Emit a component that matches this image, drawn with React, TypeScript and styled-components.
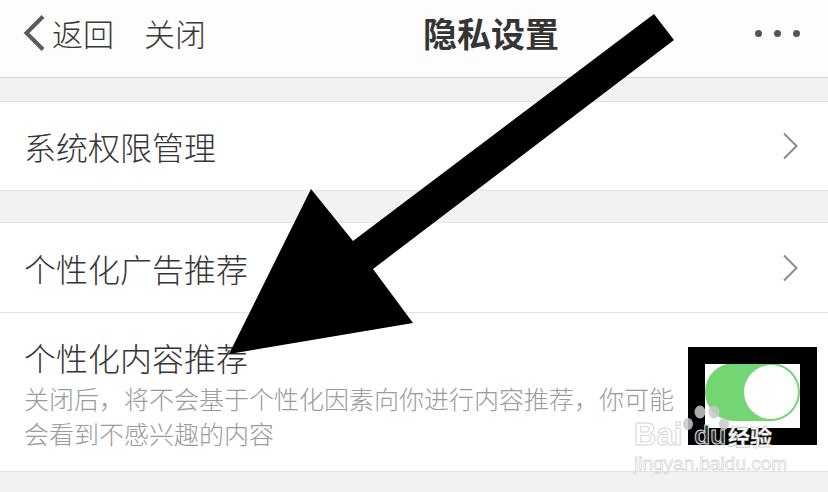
import React from "react";
import styled, { createGlobalStyle } from "styled-components";

const Global = createGlobalStyle`
  html, body { margin: 0; padding: 0; }
  body {
    width: 828px;
    height: 492px;
    overflow: hidden;
    background: #f2f2f2;
    font-family: "Noto Sans CJK SC", "Noto Sans", sans-serif;
  }
`;

const Page = styled.div`
  position: relative;
  width: 828px;
  height: 492px;
  background: #f2f2f2;
  overflow: hidden;
`;

const Header = styled.header`
  height: 78px;
  box-sizing: border-box;
  padding: 0 0 11px 22px;
  display: flex;
  align-items: center;
  background: #fdfdfd;
  border-bottom: 1px solid #d4d4d4;
`;

const NavText = styled.span<{ $gap: number }>`
  margin-left: ${(p) => p.$gap}px;
  font-size: 31px;
  line-height: 40px;
  font-weight: 300;
  color: #383838;
`;

const Title = styled.h1`
  margin: 0 0 0 217px;
  font-size: 34px;
  line-height: 44px;
  font-weight: 700;
  color: #353535;
`;

const Dots = styled.div`
  margin-left: auto;
  margin-right: 28px;
  display: flex;
  gap: 12px;
`;

const Dot = styled.span`
  width: 7px;
  height: 7px;
  border-radius: 50%;
  background: #555;
`;

const Group = styled.section<{ $top: number }>`
  margin-top: ${(p) => p.$top}px;
  background: #ffffff;
  border-top: 1px solid #e3e3e3;
  border-bottom: 1px solid #e3e3e3;
`;

const Row = styled.div<{ $h: number; $divider?: boolean }>`
  height: ${(p) => p.$h}px;
  display: flex;
  align-items: center;
  padding: 0 30px 0 24px;
  border-bottom: ${(p) => (p.$divider ? "1px solid #e3e3e3" : "none")};
`;

const Label = styled.span`
  font-size: 32px;
  line-height: 44px;
  font-weight: 300;
  color: #363636;
`;

const Chevron = styled.svg`
  margin-left: auto;
  width: 16px;
  height: 28px;
`;

const TextCol = styled.div`
  width: 660px;
  padding-top: 2px;
`;

const Sub = styled.p`
  margin: 2px 0 0;
  font-size: 25px;
  line-height: 35px;
  font-weight: 300;
  color: #9b9b9b;
`;

const Switch = styled.div<{ $on: boolean }>`
  margin-left: auto;
  margin-right: -2px;
  width: 95px;
  height: 58px;
  border-radius: 29px;
  background: ${(p) => (p.$on ? "#74d573" : "#e5e5e5")};
  display: flex;
  align-items: center;
  justify-content: ${(p) => (p.$on ? "flex-end" : "flex-start")};
  padding: 0 2px;
  box-sizing: border-box;
`;

const Knob = styled.span`
  width: 54px;
  height: 54px;
  border-radius: 50%;
  background: #ffffff;
`;

const Overlay = styled.svg`
  position: absolute;
  left: 0;
  top: 0;
  width: 828px;
  height: 492px;
  pointer-events: none;
`;

const Frame = styled.div`
  position: absolute;
  left: 688px;
  top: 347px;
  width: 129px;
  height: 98px;
  box-sizing: border-box;
  border: 17px solid #000;
  pointer-events: none;
`;

const Watermark = styled.div`
  position: absolute;
  left: 634px;
  top: 419px;
  display: flex;
  flex-direction: column;
  pointer-events: none;
  font-family: "Liberation Sans", Arial, sans-serif;
`;

const MarkLine = styled.div`
  display: flex;
  align-items: center;
  height: 32px;
  gap: 2px;
`;

const MarkBai = styled.span`
  font-size: 31px;
  line-height: 32px;
  font-weight: 700;
  color: rgba(255, 255, 255, 0.5);
  -webkit-text-stroke: 1px #d6d6d6;
`;

const MarkDu = styled.span`
  font-size: 26px;
  line-height: 32px;
  font-weight: 700;
  color: #2a2a2a;
  margin-left: 10px;
  -webkit-text-stroke: 1px #ddd;
`;

const MarkJy = styled.span`
  font-size: 22px;
  line-height: 32px;
  font-weight: 700;
  color: #ffffff;
  font-family: "Noto Sans CJK SC", sans-serif;
  -webkit-text-stroke: 0.6px #bbb;
`;

const MarkUrl = styled.span`
  margin-top: 2px;
  font-size: 19px;
  line-height: 22px;
  color: rgba(255, 255, 255, 0.6);
  -webkit-text-stroke: 0.8px #d8d8d8;
`;

const ChevronRight = () => (
  <Chevron viewBox="0 0 16 28">
    <path d="M2 1.5 L14.5 14 L2 26.5" fill="none" stroke="#8c8c8c" strokeWidth="2" />
  </Chevron>
);

export default function App() {
  return (
    <Page>
      <Global />
      <Header>
        <svg width="26" height="38" viewBox="0 0 26 38">
          <path d="M21 2.5 L4.5 19 L21 35.5" fill="none" stroke="#5a5a5a" strokeWidth="4" />
        </svg>
        <NavText $gap={4}>返回</NavText>
        <NavText $gap={30}>关闭</NavText>
        <Title>隐私设置</Title>
        <Dots>
          <Dot />
          <Dot />
          <Dot />
        </Dots>
      </Header>

      <Group $top={23}>
        <Row $h={88}>
          <Label>系统权限管理</Label>
          <ChevronRight />
        </Row>
      </Group>

      <Group $top={31}>
        <Row $h={89} $divider>
          <Label>个性化广告推荐</Label>
          <ChevronRight />
        </Row>
        <Row $h={158}>
          <TextCol>
            <Label>个性化内容推荐</Label>
            <Sub>关闭后，将不会基于个性化因素向你进行内容推荐，你可能会看到不感兴趣的内容</Sub>
          </TextCol>
          <Switch $on>
            <Knob />
          </Switch>
        </Row>
      </Group>

      <Overlay viewBox="0 0 828 492">
        <polygon
          points="654,14 674,40 373,269 413,323 229,354 311,189 353,241"
          fill="#000"
        />
      </Overlay>
      <Frame />
      <Overlay viewBox="0 0 828 492">
        <g fill="#c9c9c9" opacity="0.85">
          <ellipse cx="688" cy="424" rx="5" ry="6" />
          <ellipse cx="700" cy="412" rx="5.5" ry="6.5" />
          <ellipse cx="714" cy="412" rx="5.5" ry="6.5" />
          <ellipse cx="724" cy="424" rx="5" ry="6" />
        </g>
      </Overlay>
      <Watermark>
        <MarkLine>
          <MarkBai>Bai</MarkBai>
          <MarkDu>du</MarkDu>
          <MarkJy>经验</MarkJy>
        </MarkLine>
        <MarkUrl>jingyan.baidu.com</MarkUrl>
      </Watermark>
    </Page>
  );
}
